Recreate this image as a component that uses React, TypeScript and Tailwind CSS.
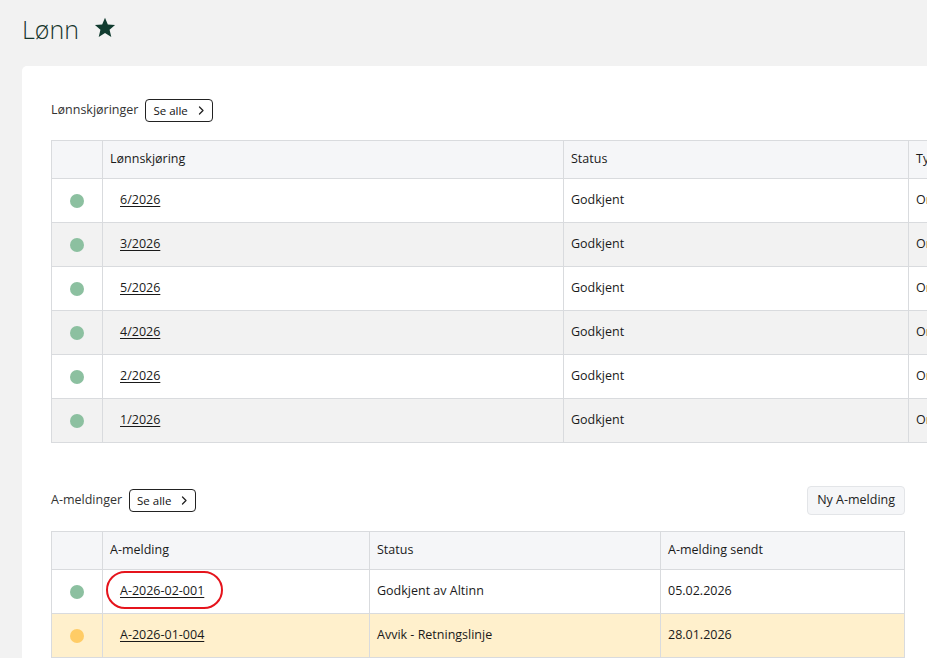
import React from 'react';

type Tone = 'ok' | 'warn';

const lonnRows = ['6/2026', '3/2026', '5/2026', '4/2026', '2/2026', '1/2026'];

const meldinger: { id: string; status: string; sent: string; tone: Tone; marked?: boolean }[] = [
  { id: 'A-2026-02-001', status: 'Godkjent av Altinn', sent: '05.02.2026', tone: 'ok', marked: true },
  { id: 'A-2026-01-004', status: 'Avvik - Retningslinje', sent: '28.01.2026', tone: 'warn' },
];

function Dot({ tone }: { tone: Tone }) {
  return (
    <span
      className={`block w-[14px] h-[14px] rounded-full mx-auto ${tone === 'ok' ? 'bg-[#8cc0a0]' : 'bg-[#ffcc66]'}`}
    />
  );
}

function SeeAll() {
  return (
    <button className="h-[23px] flex items-center gap-[9px] pl-[7px] pr-[7px] border border-[#222] rounded-[4px] text-[11.5px] text-[#111] bg-white">
      Se alle
      <svg width="8" height="9" viewBox="0 0 8 9" fill="none">
        <path d="M2.5 1l3.5 3.5L2.5 8" stroke="#222" strokeWidth="1.3" strokeLinecap="round" strokeLinejoin="round" />
      </svg>
    </button>
  );
}

function Star() {
  return (
    <svg width="22" height="21" viewBox="0 0 24 23" className="ml-[15px] mt-[-3px]">
      <path d="M12 0.8l3.1 7.4 7.9 0.6-6 5.2 1.9 7.8L12 17.6l-6.9 4.2 1.9-7.8-6-5.2 7.9-0.6z" fill="#113b2f" />
    </svg>
  );
}

const th = 'h-[38px] border border-[#d9dbde] bg-[#f5f6f8] text-left font-normal px-[7px]';
const td = 'h-[44px] border border-[#d9dbde] px-[7px]';

export default function App() {
  return (
    <div
      className="w-[927px] h-[658px] overflow-hidden bg-[#f2f2f2] text-[12.5px] text-[#1a1a1a]"
      style={{ fontFamily: '"Open Sans", "Liberation Sans", sans-serif' }}
    >
      {/* page title */}
      <div className="h-[66px] pl-[22px] pt-[11px] flex items-start">
        <h1 className="text-[25px] font-light leading-[36px] text-[#16352c] flex items-center">
          Lønn
          <Star />
        </h1>
      </div>

      <div className="ml-[22px] w-[912px] bg-white rounded-tl-[5px] pl-[29px] pr-[29px] pt-[33px] pb-10">
        {/* Lønnskjøringer */}
        <div className="h-[23px] flex items-center gap-[7px]">
          <span className="text-[#333]">Lønnskjøringer</span>
          <SeeAll />
        </div>
        <table className="mt-[18px] w-[1000px] border-collapse table-fixed">
          <colgroup>
            <col className="w-[51px]" />
            <col className="w-[461px]" />
            <col className="w-[345px]" />
            <col />
          </colgroup>
          <thead>
            <tr>
              <th className={th}></th>
              <th className={th}>Lønnskjøring</th>
              <th className={th}>Status</th>
              <th className={th}>Type</th>
            </tr>
          </thead>
          <tbody>
            {lonnRows.map((r, i) => (
              <tr key={r} className={i % 2 === 1 ? 'bg-[#f2f2f2]' : 'bg-white'}>
                <td className={td}>
                  <Dot tone="ok" />
                </td>
                <td className={td}>
                  <a className="ml-[10px] underline underline-offset-[2px]">{r}</a>
                </td>
                <td className={td}>Godkjent</td>
                <td className={td}>Ordinær</td>
              </tr>
            ))}
          </tbody>
        </table>

        {/* A-meldinger */}
        <div className="mt-[43px] h-[29px] flex items-center justify-between">
          <div className="flex items-center gap-[7px]">
            <span className="text-[#333]">A-meldinger</span>
            <SeeAll />
          </div>
          <button className="h-[29px] px-[9px] bg-[#f5f6f8] border border-[#e3e5e8] rounded-[4px] text-[12.5px] text-[#222]">
            Ny A-melding
          </button>
        </div>
        <table className="mt-[16px] w-full border-collapse table-fixed">
          <colgroup>
            <col className="w-[51px]" />
            <col className="w-[267px]" />
            <col className="w-[291px]" />
            <col />
          </colgroup>
          <thead>
            <tr>
              <th className={th}></th>
              <th className={th}>A-melding</th>
              <th className={th}>Status</th>
              <th className={th}>A-melding sendt</th>
            </tr>
          </thead>
          <tbody>
            {meldinger.map(m => (
              <tr key={m.id} className={m.tone === 'warn' ? 'bg-[#fff0cc]' : 'bg-white'}>
                <td className={td}>
                  <Dot tone={m.tone} />
                </td>
                <td className={`${td} relative`}>
                  <a className="ml-[10px] underline underline-offset-[2px]">{m.id}</a>
                  {m.marked && (
                    <span className="absolute left-[3px] top-[1px] w-[117px] h-[38px] rounded-full border-[2.5px] border-[#e5141c] pointer-events-none" />
                  )}
                </td>
                <td className={td}>{m.status}</td>
                <td className={td}>{m.sent}</td>
              </tr>
            ))}
          </tbody>
        </table>
      </div>
    </div>
  );
}
